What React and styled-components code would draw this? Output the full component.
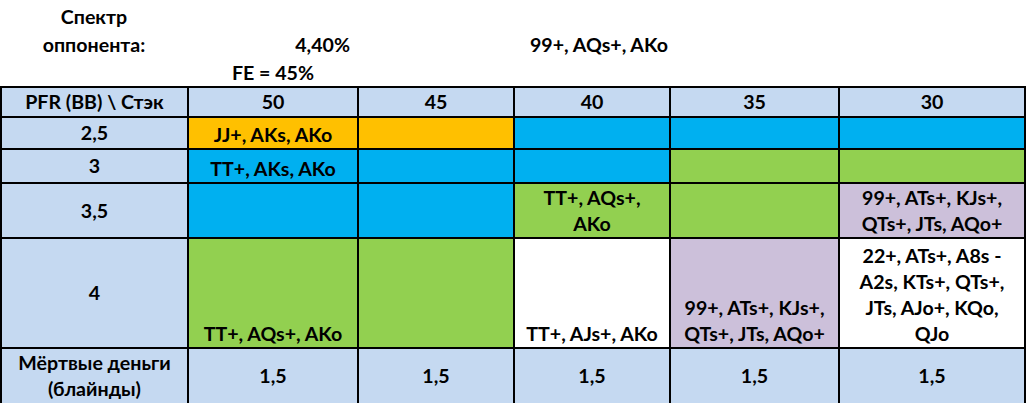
import React from "react";
import styled, { createGlobalStyle } from "styled-components";

const GlobalStyle = createGlobalStyle`
  html, body { margin: 0; padding: 0; background: #ffffff; }
  body { font-family: "Lato", "Noto Sans", sans-serif; color: #000; }
`;

const COLS = "185px 168px 154px 154px 167px 184px";

const Page = styled.div`
  width: 1026px;
  font-weight: 700;
  font-size: 19.6px;
`;

const Intro = styled.div`
  display: grid;
  grid-template-columns: 188px 170px 156px 156px 169px 187px;
  grid-template-rows: 59px 27px;
`;

const IntroCell = styled.div`
  display: flex;
  flex-direction: column;
  justify-content: ${(p) =>
    p.$valign === "end" ? "flex-end" : p.$valign === "start" ? "flex-start" : "center"};
  align-items: ${(p) =>
    p.$align === "right" ? "flex-end" : p.$align === "left" ? "flex-start" : "center"};
  text-align: center;
  line-height: 28px;
  padding: ${(p) => p.$pad || "0"};
  grid-column: ${(p) => p.$col};
  grid-row: ${(p) => p.$row};
  white-space: nowrap;
`;

const Table = styled.div`
  display: grid;
  grid-template-columns: ${COLS};
  grid-template-rows: 28px 30px 32px 53px 108px 54px;
  gap: 2px;
  padding: 2px;
  background: #000;
`;

const Cell = styled.div`
  background: ${(p) => p.$bg || "#ffffff"};
  display: flex;
  flex-direction: column;
  justify-content: ${(p) => (p.$valign === "end" ? "flex-end" : "center")};
  align-items: center;
  text-align: center;
  line-height: 26px;
  overflow: hidden;
  white-space: nowrap;
`;

const HEAD = "#c5d9f1";
const ORANGE = "#ffc000";
const BLUE = "#00b0f0";
const GREEN = "#92d050";
const LILAC = "#ccc0da";
const WHITE = "#ffffff";

const Lines = ({ lines }) =>
  lines.map((l, i) => <span key={i}>{l}</span>);

const headers = ["PFR (BB) \\ Стэк", "50", "45", "40", "35", "30"];

const rows = [
  {
    label: ["2,5"],
    cells: [
      { bg: ORANGE, lines: ["JJ+, AKs, AKo"] },
      { bg: ORANGE },
      { bg: BLUE },
      { bg: BLUE },
      { bg: BLUE },
    ],
  },
  {
    label: ["3"],
    cells: [
      { bg: BLUE, lines: ["TT+, AKs, AKo"] },
      { bg: BLUE },
      { bg: BLUE },
      { bg: GREEN },
      { bg: GREEN },
    ],
  },
  {
    label: ["3,5"],
    cells: [
      { bg: BLUE },
      { bg: BLUE },
      { bg: GREEN, lines: ["TT+, AQs+,", "AKo"] },
      { bg: GREEN },
      { bg: LILAC, lines: ["99+, ATs+, KJs+,", "QTs+, JTs, AQo+"] },
    ],
  },
  {
    label: ["4"],
    cells: [
      { bg: GREEN, lines: ["TT+, AQs+, AKo"] },
      { bg: GREEN },
      { bg: WHITE, lines: ["TT+, AJs+, AKo"] },
      { bg: LILAC, lines: ["99+, ATs+, KJs+,", "QTs+, JTs, AQo+"] },
      {
        bg: WHITE,
        lines: ["22+, ATs+, A8s -", "A2s, KTs+, QTs+,", "JTs, AJo+, KQo,", "QJo"],
      },
    ],
  },
];

export default function App() {
  return (
    <Page>
      <GlobalStyle />
      <Intro>
        <IntroCell $col="1" $row="1" $valign="start" $pad="3px 0 0 0">
          <span>Спектр</span>
          <span>оппонента:</span>
        </IntroCell>
        <IntroCell $col="2" $row="1" $valign="end" $align="right" $pad="0 8px 0 0">
          4,40%
        </IntroCell>
        <IntroCell $col="4" $row="1" $valign="end" $align="left" $pad="0 0 0 16px">
          99+, AQs+, AKo
        </IntroCell>
        <IntroCell $col="2" $row="2">FE = 45%</IntroCell>
      </Intro>
      <Table>
        {headers.map((h) => (
          <Cell key={h} $bg={HEAD}>
            {h}
          </Cell>
        ))}
        {rows.map((r, ri) => (
          <React.Fragment key={ri}>
            <Cell $bg={HEAD}>
              <Lines lines={r.label} />
            </Cell>
            {r.cells.map((c, ci) => (
              <Cell key={ci} $bg={c.bg} $valign="end">
                {c.lines && <Lines lines={c.lines} />}
              </Cell>
            ))}
          </React.Fragment>
        ))}
        <Cell $bg={HEAD}>
          <span>Мёртвые деньги</span>
          <span>(блайнды)</span>
        </Cell>
        {[0, 1, 2, 3, 4].map((i) => (
          <Cell key={i} $bg={HEAD}>
            1,5
          </Cell>
        ))}
      </Table>
    </Page>
  );
}
